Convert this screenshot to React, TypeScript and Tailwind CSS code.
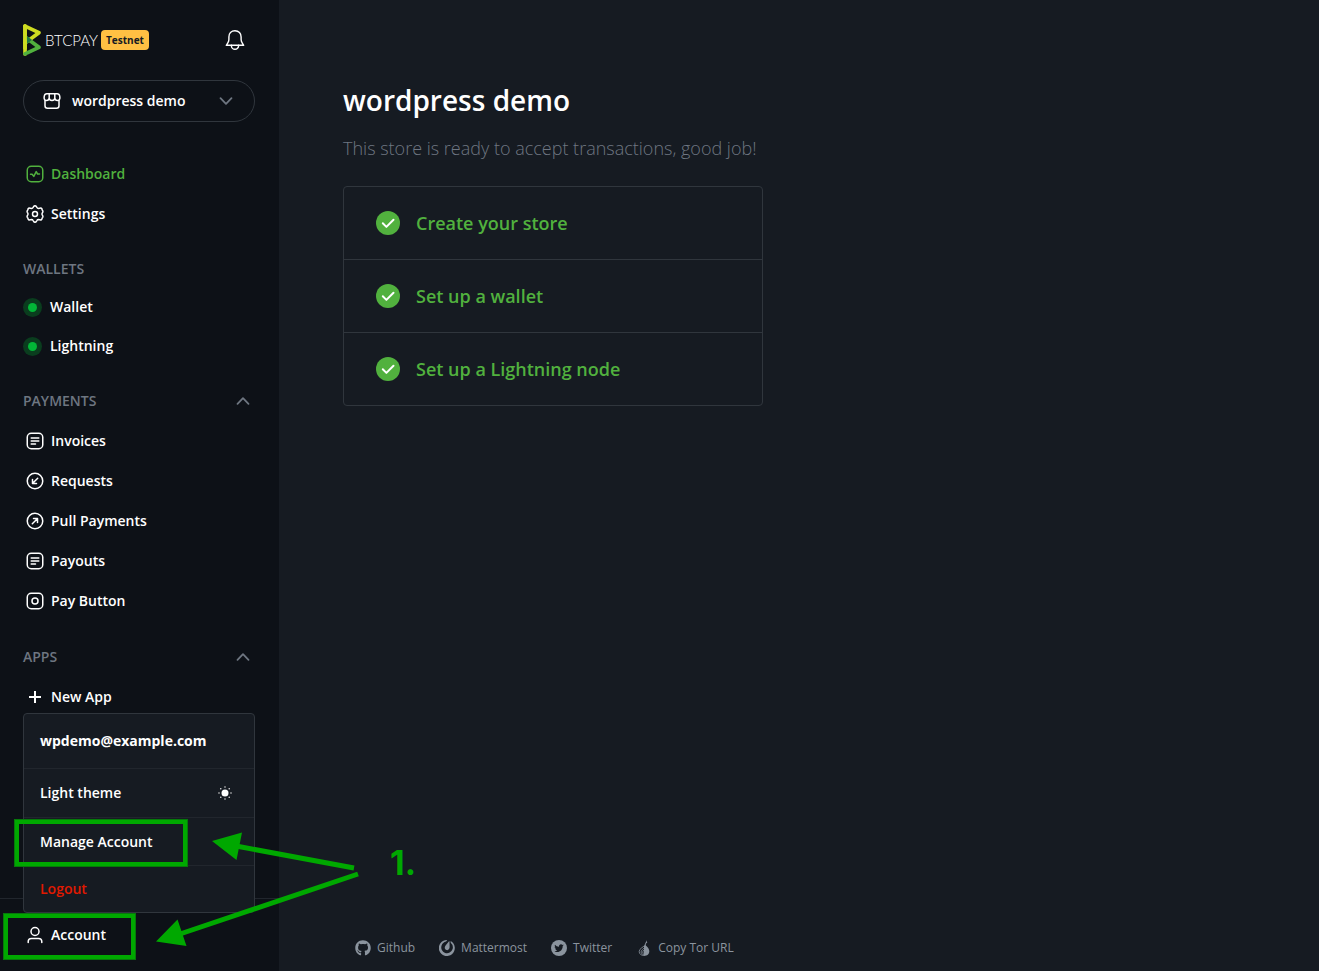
import type { ReactNode } from "react";
import { FaGithub } from "react-icons/fa";

function Icon({ children }: { children: ReactNode }) {
  return (
    <svg
      className="size-6 shrink-0"
      viewBox="0 0 24 24"
      fill="none"
      stroke="currentColor"
      strokeWidth="1.5"
      strokeLinecap="round"
      strokeLinejoin="round"
      aria-hidden="true"
    >
      {children}
    </svg>
  );
}

const frame = <rect x="4.25" y="4.25" width="15.5" height="15.5" rx="4" />;

const DashboardIcon = () => (
  <Icon>
    {frame}
    <path d="M7.5 12.2h1.6l1.7 2.2 2.4-4.8 1.4 2.4h1.9" />
  </Icon>
);

const SettingsIcon = () => (
  <Icon>
    <circle cx="12" cy="12" r="2.5" />
    <path d="M10.6 4.6a1.6 1.6 0 0 1 2.8 0l.5.9c.3.6 1 .9 1.6.9l1.1-.1a1.6 1.6 0 0 1 2.5 1.5l.6.9c.3.5.3 1.1 0 1.6l-.5.8c-.3.6-.3 1.2 0 1.8l.5.8c.3.5.3 1.1 0 1.6l-.6.9a1.6 1.6 0 0 1-2.5 1.5l-1.1-.1c-.6 0-1.3.3-1.6.9l-.5.9a1.6 1.6 0 0 1-2.8 0l-.5-.9c-.3-.6-1-.9-1.6-.9l-1.1.1a1.6 1.6 0 0 1-2.5-1.5l-.6-.9a1.6 1.6 0 0 1 0-1.6l.5-.8c.3-.6.3-1.2 0-1.8l-.5-.8a1.6 1.6 0 0 1 0-1.6l.6-.9a1.6 1.6 0 0 1 2.5-1.5l1.1.1c.6 0 1.3-.3 1.6-.9z" />
  </Icon>
);

const InvoiceIcon = () => (
  <Icon>
    {frame}
    <path d="M8.2 9h7.6M8.2 12h7.6M8.2 15h4.3" />
  </Icon>
);

const RequestIcon = () => (
  <Icon>
    <circle cx="12" cy="12" r="7.75" />
    <path d="M14.7 9.3l-5 5M9.5 10.5v4h4" />
  </Icon>
);

const PullIcon = () => (
  <Icon>
    <circle cx="12" cy="12" r="7.75" />
    <path d="M9.3 14.7l5-5M10.5 9.5h4v4" />
  </Icon>
);

const PayButtonIcon = () => (
  <Icon>
    {frame}
    <circle cx="12" cy="12" r="3" />
  </Icon>
);

const PlusIcon = () => (
  <Icon>
    <path strokeWidth="2" strokeLinecap="butt" d="M12 6v12M6 12h12" />
  </Icon>
);

const AccountIcon = () => (
  <Icon>
    <circle cx="12" cy="8.5" r="4" />
    <path d="M5.2 19.5v-.8c0-2 1.5-3.2 3.3-3.2h7c1.8 0 3.3 1.2 3.3 3.2v.8" />
  </Icon>
);

function Chevron({ up = false }: { up?: boolean }) {
  return (
    <svg
      className="h-3 w-3.5"
      viewBox="0 0 14 12"
      fill="none"
      stroke="currentColor"
      strokeWidth="1.8"
      strokeLinecap="round"
      strokeLinejoin="round"
      aria-hidden="true"
    >
      <path d={up ? "M1.5 8.8L7 3.2l5.5 5.6" : "M1.5 3.2L7 8.8l5.5-5.6"} />
    </svg>
  );
}

function Logo() {
  return (
    <a href="#home" className="flex items-center text-white">
      <svg className="h-8 w-[18px]" viewBox="0 0 47 84" aria-hidden="true">
        <path
          fill="#CEDC21"
          d="M5.206 83.433a4.86 4.86 0 01-4.859-4.861V5.431a4.86 4.86 0 119.719 0v73.141a4.861 4.861 0 01-4.86 4.861"
        />
        <path
          fill="#51B13E"
          d="M5.209 83.433a4.862 4.862 0 01-2.086-9.253L32.43 60.274 2.323 38.093a4.861 4.861 0 015.766-7.826l36.647 26.999a4.864 4.864 0 01-.799 8.306L7.289 82.964a4.866 4.866 0 01-2.08.469"
        />
        <path
          fill="#CEDC21"
          d="M5.211 54.684a4.86 4.86 0 01-2.887-8.774L32.43 23.73 3.123 9.821a4.861 4.861 0 014.166-8.784l36.648 17.394a4.86 4.86 0 01.799 8.305l-36.647 27a4.844 4.844 0 01-2.878.948"
        />
        <path fill="#1E7A44" d="M10.066 31.725v20.553L24.01 42.006z" />
        <path
          fill="#CEDC21"
          d="M10.066 5.431A4.861 4.861 0 005.206.57 4.861 4.861 0 00.347 5.431v61.165h9.72V5.431z"
        />
      </svg>
      <span className="ml-1 font-['Lato'] text-[15px] font-light leading-8">BTCPAY</span>
      <span className="ml-[3px] flex h-5 items-center rounded bg-[#ffc043] px-[5px] text-[10px] font-bold text-[#161b22]">
        Testnet
      </span>
    </a>
  );
}

function NavItem({ icon, label, active = false }: { icon: ReactNode; label: string; active?: boolean }) {
  return (
    <li>
      <a
        href={"#" + label.toLowerCase().replace(" ", "-")}
        className={"flex h-10 items-center gap-1 " + (active ? "text-[#51b13e]" : "text-white")}
      >
        {icon}
        {label}
      </a>
    </li>
  );
}

function WalletItem({ label }: { label: string }) {
  return (
    <li>
      <a href={"#" + label.toLowerCase()} className="flex h-[38px] items-center gap-2 text-white">
        <span className="flex size-[19px] items-center justify-center rounded-full bg-[#0a3d1e]">
          <span className="size-[9px] rounded-full bg-[#02b637]" />
        </span>
        {label}
      </a>
    </li>
  );
}

function SectionToggle({ label }: { label: string }) {
  return (
    <button type="button" className="mt-4 flex h-10 w-full items-center justify-between pr-[5px] text-[#6e7681]">
      {label}
      <Chevron up />
    </button>
  );
}

function AccountMenu() {
  return (
    <div className="absolute bottom-full left-[23px] right-6 z-10 rounded border border-[#30363d] bg-[#161b22] text-white">
      <div className="flex h-[55px] items-center border-b border-[#21262d] px-4 font-bold">wpdemo@example.com</div>
      <button type="button" className="flex h-[49px] w-full items-center justify-between border-b border-[#21262d] pl-4 pr-[22px]">
        Light theme
        <svg className="size-3.5" viewBox="0 0 14 14" fill="currentColor" aria-hidden="true">
          <circle cx="7" cy="7" r="3.5" />
          <circle cx="7" cy="1" r=".7" />
          <circle cx="7" cy="13" r=".7" />
          <circle cx="1" cy="7" r=".7" />
          <circle cx="13" cy="7" r=".7" />
          <circle cx="2.8" cy="2.8" r=".7" />
          <circle cx="11.2" cy="2.8" r=".7" />
          <circle cx="2.8" cy="11.2" r=".7" />
          <circle cx="11.2" cy="11.2" r=".7" />
        </svg>
      </button>
      <a href="#manage" className="relative flex h-12 items-center border-b border-[#21262d] px-4">
        Manage Account
        <span className="absolute -left-[10px] top-px h-12 w-[174px] border-[5px] border-[#00a800] outline-1 -outline-offset-1 outline-[#067a0a]" />
      </a>
      <a href="#logout" className="flex h-[46px] items-center px-4 text-[#e11900]">
        Logout
      </a>
    </div>
  );
}

function Sidebar() {
  return (
    <nav className="flex w-[279px] shrink-0 flex-col bg-[#0d1117] text-sm font-semibold">
      <div className="flex-1 pl-[23px] pr-6 pt-6">
        <div className="flex h-8 items-center justify-between pr-2">
          <Logo />
          <button type="button" aria-label="Notifications" className="text-white">
            <svg
              className="size-6"
              viewBox="0 0 24 24"
              fill="none"
              stroke="currentColor"
              strokeWidth="1.4"
              strokeLinecap="round"
              strokeLinejoin="round"
              aria-hidden="true"
            >
              <path d="M12 2.7c-3.8 0-6.1 2.7-6.1 6.2v2.7c0 1.5-.5 2.5-1.2 3.6l-1.4 2.1h17.4l-1.4-2.1c-.7-1.1-1.2-2.1-1.2-3.6V8.9c0-3.5-2.3-6.2-6.1-6.2z" />
              <path d="M8.4 17.3v.4a3.6 3.6 0 0 0 7.2 0v-.4" />
            </svg>
          </button>
        </div>

        <button
          type="button"
          className="mt-6 flex h-[42px] w-full items-center rounded-full border border-[#30363d] pl-4 pr-[21px] text-white"
        >
          <Icon>
            <path d="M5 11.5v5.3c0 1.5 1 2.5 2.5 2.5h9c1.5 0 2.5-1 2.5-2.5v-5.3" />
            <path d="M6.8 4.7h10.4c1.4 0 2.3 1 2.5 2.3l.2 1.8c.1 1.5-1 2.7-2.4 2.7s-2.6-1.1-2.7-2.5c-.1 1.4-1.3 2.5-2.8 2.5S9.3 10.4 9.2 9c-.1 1.4-1.3 2.5-2.7 2.5S4 10.3 4.1 8.8L4.3 7c.2-1.3 1.1-2.3 2.5-2.3zM9.2 4.7V9M14.8 4.7V9" />
          </Icon>
          <span className="ml-2 flex-1 text-left">wordpress demo</span>
          <span className="text-[#6e7681]">
            <Chevron />
          </span>
        </button>

        <ul className="mt-8">
          <NavItem icon={<DashboardIcon />} label="Dashboard" active />
          <NavItem icon={<SettingsIcon />} label="Settings" />
        </ul>

        <h2 className="mt-4 flex h-[38px] items-center text-[#6e7681]">WALLETS</h2>
        <ul className="flex flex-col gap-px">
          <WalletItem label="Wallet" />
          <WalletItem label="Lightning" />
        </ul>

        <SectionToggle label="PAYMENTS" />
        <ul>
          <NavItem icon={<InvoiceIcon />} label="Invoices" />
          <NavItem icon={<RequestIcon />} label="Requests" />
          <NavItem icon={<PullIcon />} label="Pull Payments" />
          <NavItem icon={<InvoiceIcon />} label="Payouts" />
          <NavItem icon={<PayButtonIcon />} label="Pay Button" />
        </ul>

        <SectionToggle label="APPS" />
        <ul>
          <NavItem icon={<PlusIcon />} label="New App" />
        </ul>
      </div>

      <div className="border-t border-[#21262d] pb-3.5 pt-3.5">
        <div className="relative">
          <AccountMenu />
          <button type="button" className="flex h-11 w-full items-center gap-1 pl-[23px] text-white">
            <AccountIcon />
            Account
          </button>
          <span className="pointer-events-none absolute left-[3px] top-0 z-20 h-[47px] w-[133px] border-[5px] border-[#00a800] outline-1 -outline-offset-1 outline-[#067a0a]" />
        </div>
      </div>
    </nav>
  );
}

function SetupStep({ label }: { label: string }) {
  return (
    <li className="border-b border-[#30363d] last:border-b-0">
      <a href={"#" + label.toLowerCase().replaceAll(" ", "-")} className="flex h-[72px] items-center gap-4 px-8">
        <svg className="size-6" viewBox="0 0 24 24" fill="none" aria-hidden="true">
          <circle cx="12" cy="12" r="12" fill="#51b13e" />
          <path d="M6.8 12.3l3.6 3.6 7.1-7.1" stroke="#fff" strokeWidth="2" strokeLinecap="round" strokeLinejoin="round" />
        </svg>
        {label}
      </a>
    </li>
  );
}

function FooterLink({ icon, label }: { icon: ReactNode; label: string }) {
  return (
    <a href={"#" + label.toLowerCase().replaceAll(" ", "-")} className="flex items-center gap-1.5">
      {icon}
      {label}
    </a>
  );
}

function Footer() {
  return (
    <footer className="flex h-[46px] items-center gap-6 pl-3 text-xs text-[#8b949e]">
      <FooterLink icon={<FaGithub className="size-4" />} label="Github" />
      <FooterLink
        icon={
          <svg className="size-4" viewBox="0 0 16 16" fill="currentColor" aria-hidden="true">
            <path d="M11.6 1l.1 1.8a6.1 6.1 0 0 1 1.9 6.3 5.9 5.9 0 0 1-7.5 3.8A5.8 5.8 0 0 1 2.6 5.5a6 6 0 0 1 4.5-4.1L8.2.05A8 8 0 1 0 11.6 1z" />
            <path d="M10.6 6.6l-.1-5.1c0-.4-.3-.4-.5-.2L6.4 5.8c-1.2 1.6-.7 3.6.9 4.2 1.9.7 3.5-.9 3.3-3.4z" />
          </svg>
        }
        label="Mattermost"
      />
      <FooterLink
        icon={
          <svg className="size-4" viewBox="0 0 16 16" aria-hidden="true">
            <circle cx="8" cy="8" r="8" fill="currentColor" />
            <path
              fill="#161b22"
              d="M12.8 5.1c-.4.2-.7.3-1.1.3.4-.2.7-.6.9-1-.4.2-.8.4-1.2.5a2 2 0 0 0-3.4 1.8c-1.6-.1-3-.8-4-2-.5.9-.3 2 .6 2.6-.3 0-.6-.1-.9-.2 0 .9.7 1.7 1.6 1.9-.3.1-.6.1-.9 0 .3.8 1 1.3 1.8 1.4-.8.6-1.8.9-2.8.8 3.9 2.4 8.3-.4 8.3-4.9v-.3c.4-.3.8-.6 1.1-1z"
            />
          </svg>
        }
        label="Twitter"
      />
      <FooterLink
        icon={
          <svg className="size-4" viewBox="0 0 16 16" fill="currentColor" aria-hidden="true">
            <path d="M8.4 5.3L10.8 0c-.3 1.5 0 2 .6 2.3-1.1.8-1.7 1.8-1.7 2.8.2 1.3 3.6 2.7 3.6 6.2 0 2.8-2.1 4.7-5.3 4.7V5.9z" />
            <path
              fill="none"
              stroke="currentColor"
              strokeWidth=".8"
              d="M8 5.8C7.2 7.6 3.2 8.4 3.2 11.5c0 2.4 1.9 4 4.8 4M8 8c-.5 1.3-2.9 2-2.9 3.9 0 1.5 1 2.5 2.9 2.6M7.9 10c-.3.9-1.2 1.2-1.2 2.1 0 .7.5 1.2 1.2 1.3"
            />
          </svg>
        }
        label="Copy Tor URL"
      />
    </footer>
  );
}

function Callout() {
  return (
    <div className="pointer-events-none absolute bottom-0 left-0 z-30 text-[#00a800]">
      <svg className="h-[171px] w-[440px]" viewBox="0 800 440 171" aria-hidden="true">
        <g stroke="currentColor" fill="currentColor" strokeWidth="5">
          <path d="M354 868L236 846M358 874L180 934" />
          <path stroke="none" d="M212 841L242 832.5L236.5 860ZM156 941.5L177.5 919.5L186.5 946Z" />
        </g>
      </svg>
      <span className="absolute left-[390px] top-[45px] font-['Inter'] text-[34px] font-bold leading-9">1.</span>
    </div>
  );
}

export default function App() {
  return (
    <div className="relative flex min-h-screen bg-[#161b22] font-['Open_Sans',sans-serif]">
      <Sidebar />
      <div className="flex flex-1 flex-col px-16">
        <main className="flex-1 pt-20">
          <h1 className="text-[28px] font-semibold leading-10 text-white">wordpress demo</h1>
          <p className="mt-3.5 text-lg font-light leading-7 text-[#6e7681]">
            This store is ready to accept transactions, good job!
          </p>
          <ul className="mt-6 max-w-[420px] rounded border border-[#30363d] text-lg font-semibold text-[#51b13e]">
            <SetupStep label="Create your store" />
            <SetupStep label="Set up a wallet" />
            <SetupStep label="Set up a Lightning node" />
          </ul>
        </main>
        <Footer />
      </div>
      <Callout />
    </div>
  );
}
